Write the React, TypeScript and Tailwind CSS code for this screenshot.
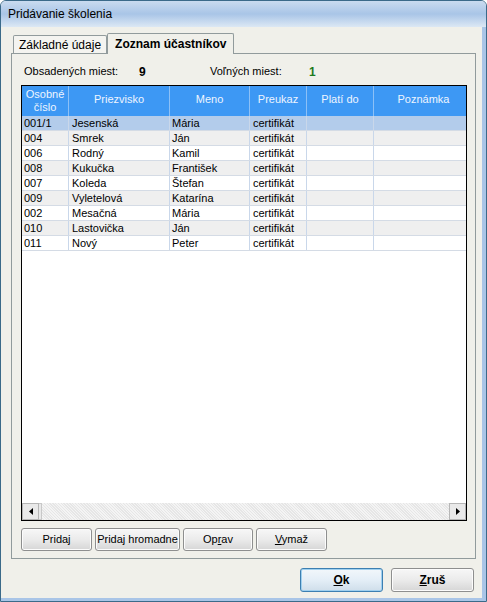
import React from "react";

const rows = [
  { id: "001/1", last: "Jesenská", first: "Mária" },
  { id: "004", last: "Smrek", first: "Ján" },
  { id: "006", last: "Rodný", first: "Kamil" },
  { id: "008", last: "Kukučka", first: "František" },
  { id: "007", last: "Koleda", first: "Štefan" },
  { id: "009", last: "Vyletelová", first: "Katarína" },
  { id: "002", last: "Mesačná", first: "Mária" },
  { id: "010", last: "Lastovička", first: "Ján" },
  { id: "011", last: "Nový", first: "Peter" },
];

const cols = "grid grid-cols-[47px_101px_80px_57px_67px_100px]";

const Btn = ({ children, w }: { children: React.ReactNode; w: string }) => (
  <button
    className={`${w} h-[23px] rounded-[3px] border border-[#8e8f8f] bg-gradient-to-b from-[#f7f7f7] via-[#ebebeb] to-[#d6d6d6] text-[11px] text-black shadow-[inset_0_0_0_1px_#fcfcfc]`}
  >
    {children}
  </button>
);

export default function App() {
  return (
    <div
      className="flex h-[602px] w-[487px] flex-col overflow-hidden rounded-t-[6px] border border-[#3b6a89] bg-[#f0f0ea] text-black"
      style={{ fontFamily: '"Liberation Sans", Arial, sans-serif' }}
    >
      {/* title bar */}
      <div className="flex h-[26px] shrink-0 items-center bg-gradient-to-b from-[#c9dbef] via-[#a9c5e7] to-[#dce8f4] px-[7px] text-[12px]">
        Pridávanie školenia
      </div>

      <div className="flex flex-1 flex-col border-r-[4px] border-b-[3px] border-[#a9c5e7] pl-[10px] pr-[6px] pt-[5px]">
        {/* tabs */}
        <div className="relative z-10 flex h-[21px] items-end pl-[2px]">
          <div className="flex h-[18px] items-center rounded-t-[2px] border border-b-0 border-[#919b9c] bg-[#f4f4f0] px-[5px] text-[12px]">
            Základné údaje
          </div>
          <div className="-mb-px flex h-[21px] items-center rounded-t-[2px] border border-b-0 border-[#919b9c] bg-[#f0f0ea] px-[7px] text-[12px] font-bold">
            Zoznam účastníkov
          </div>
        </div>

        {/* tab panel */}
        <div className="flex h-[506px] w-[465px] flex-col border border-[#919b9c] px-[9px]">
          <div className="flex h-[31px] items-center pt-[4px] text-[11px]">
            <span className="w-[118px] pl-[3px]">Obsadených miest:</span>
            <span className="w-[71px] text-[12px] font-bold">9</span>
            <span className="w-[99px]">Voľných miest:</span>
            <span className="text-[12px] font-bold text-[#1d7a1d]">1</span>
          </div>

          {/* table */}
          <div className="flex h-[436px] w-[446px] flex-col overflow-hidden border border-black bg-white">
            <div className={`${cols} h-[30px] shrink-0 bg-[#3d98f4] text-[11px] leading-[13px] text-[#eef5ff]`}>
              <div className="flex flex-col items-center justify-center border-r border-[#8cc0f7]">
                <span>Osobné</span>
                <span>číslo</span>
              </div>
              {["Priezvisko", "Meno", "Preukaz", "Platí do", "Poznámka"].map((h) => (
                <div
                  key={h}
                  className="flex items-center justify-center border-r border-[#8cc0f7] pb-[3px]"
                >
                  {h}
                </div>
              ))}
            </div>

            <div className="flex-1">
              {rows.map((r, i) => (
                <div
                  key={r.id}
                  className={`${cols} h-[15px] border-b border-[#d4dbe5] text-[11px] leading-[14px] ${
                    i === 0 ? "bg-[#b3cceb]" : i % 2 === 1 ? "bg-[#efefef]" : "bg-white"
                  }`}
                >
                  <div className="border-r border-[#c9d7ea] pl-[2px]">{r.id}</div>
                  <div className="border-r border-[#c9d7ea] pl-[3px]">{r.last}</div>
                  <div className="border-r border-[#c9d7ea] pl-[2px]">{r.first}</div>
                  <div className="border-r border-[#c9d7ea] pl-[3px]">certifikát</div>
                  <div className="border-r border-[#c9d7ea]"></div>
                  <div></div>
                </div>
              ))}
            </div>

            {/* horizontal scrollbar */}
            <div className="flex h-[17px] shrink-0 items-stretch bg-[#ececec] bg-[repeating-linear-gradient(45deg,#f4f4f4_0px,#f4f4f4_1px,#e6e6e6_1px,#e6e6e6_2px)]">
              <div className="flex w-[17px] items-center justify-center border border-[#b6b6b6] bg-[#e9e9e9]">
                <svg width="4" height="7" viewBox="0 0 4 7">
                  <path d="M4 0 L0 3.5 L4 7 Z" fill="#000" />
                </svg>
              </div>
              <div className="w-[3px] border-y border-r border-[#c8c8c8] bg-[#e9e9e9]" />
              <div className="flex-1" />
              <div className="flex w-[17px] items-center justify-center border border-[#b6b6b6] bg-[#e9e9e9]">
                <svg width="4" height="7" viewBox="0 0 4 7">
                  <path d="M0 0 L4 3.5 L0 7 Z" fill="#000" />
                </svg>
              </div>
            </div>
          </div>

          <div className="mt-[7px] flex gap-[3px]">
            <Btn w="w-[71px]">Pridaj</Btn>
            <Btn w="w-[85px]">Pridaj hromadne</Btn>
            <Btn w="w-[70px]">
              Op<span className="underline">r</span>av
            </Btn>
            <Btn w="w-[71px]">
              <span className="underline">V</span>ymaž
            </Btn>
          </div>
        </div>

        {/* dialog buttons */}
        <div className="mt-[9px] flex justify-end gap-[8px] pr-[2px]">
          <button className="h-[24px] w-[83px] rounded-[3px] border border-[#3c7fb1] bg-gradient-to-b from-[#f2f7fb] via-[#e4eef7] to-[#cfdeea] text-[12px] font-bold shadow-[inset_0_0_0_1px_#9fd0ef]">
            <span className="underline">O</span>k
          </button>
          <button className="h-[24px] w-[83px] rounded-[3px] border border-[#8e8f8f] bg-gradient-to-b from-[#f7f7f7] via-[#ebebeb] to-[#d6d6d6] text-[12px] font-bold shadow-[inset_0_0_0_1px_#fcfcfc]">
            <span className="underline">Z</span>ruš
          </button>
        </div>
      </div>
    </div>
  );
}
